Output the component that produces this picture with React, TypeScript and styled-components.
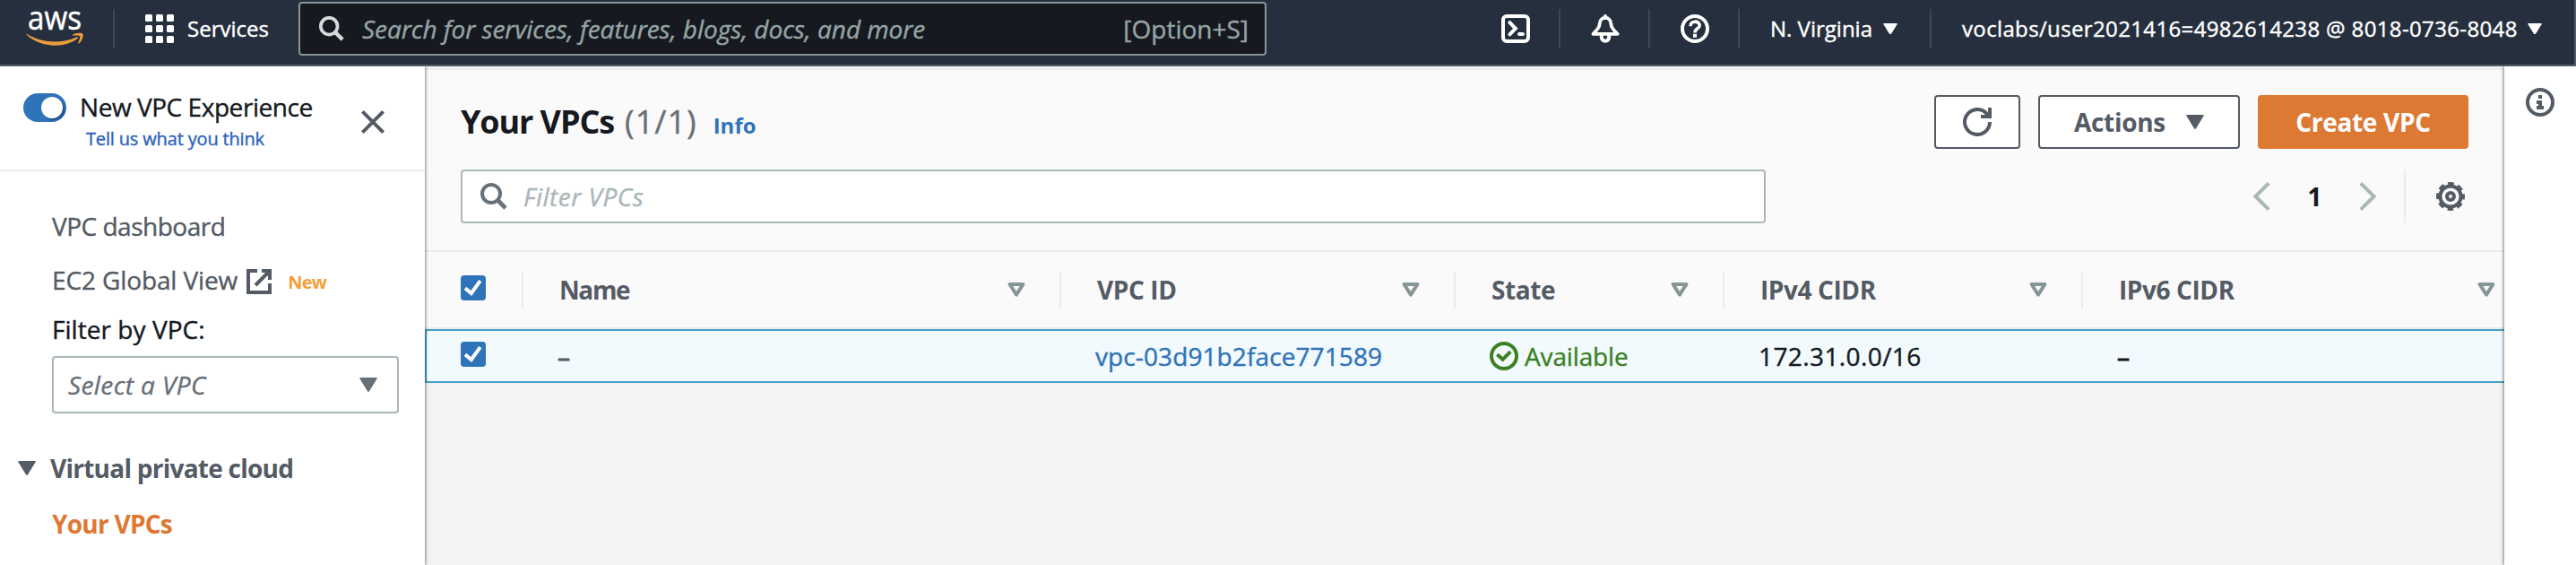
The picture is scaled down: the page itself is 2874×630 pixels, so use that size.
import React from "react";
import styled, { createGlobalStyle } from "styled-components";

const color = {
  nav: "#262f3e",
  ink: "#16191f",
  slate: "#545b64",
  muted: "#687078",
  line: "#eaeded",
  field: "#aab7b8",
  link: "#2f73b9",
  orange: "#dd7933",
};

const GlobalStyle = createGlobalStyle`
  * { box-sizing: border-box; }
  body {
    margin: 0;
    background: #f2f3f3;
    font-family: "Open Sans", "Noto Sans", sans-serif;
    font-size: 28px;
    font-weight: 400;
    line-height: 40px;
    color: ${color.ink};
    overflow: hidden;
  }
  svg { display: block; flex: none; }
`;

const Page = styled.div`
  display: flex;
  flex-direction: column;
  width: 2874px;
  height: 630px;
  overflow: hidden;
`;

const Label = styled.span<{ $track?: number; $bold?: boolean }>`
  white-space: nowrap;
  letter-spacing: ${(p) => p.$track ?? 0}px;
  -webkit-text-stroke: ${(p) => (p.$bold ? 0 : 0.4)}px;
`;

/* ---------- top navigation ---------- */

const TopNav = styled.header`
  display: flex;
  align-items: center;
  flex: none;
  height: 74px;
  padding: 0 0 8px 28px;
  background: ${color.nav};
  border-bottom: 2px solid ${color.slate};
  border-right: 2px solid ${color.slate};
  color: #fff;
  font-size: 24px;
  font-weight: 500;
  line-height: 42px;
  position: relative;
  z-index: 2;
`;

const NavDivider = styled.i`
  flex: none;
  width: 2px;
  height: 44px;
  background: #414750;
`;

const LogoSlot = styled.div`
  width: 98px;
  flex: none;
`;

const ServicesButton = styled.div`
  display: flex;
  align-items: center;
  gap: 15px;
  width: 205px;
  padding-left: 34px;
`;

const AppGrid = styled.div`
  display: grid;
  grid-template-columns: repeat(3, 8px);
  gap: 4px;
`;

const AppDot = styled.i`
  height: 8px;
  border-radius: 1.5px;
  background: #fff;
`;

const GlobalSearch = styled.div`
  display: flex;
  align-items: center;
  width: 1080px;
  height: 60px;
  padding: 0 18px 0 21px;
  border: 2px solid #879596;
  border-radius: 4px;
  background: ${color.ink};
  color: #95a5a6;
  font-size: 28px;
  font-weight: 400;
`;

const SearchHint = styled(Label)`
  flex: 1;
  margin-left: 20px;
  font-style: italic;
`;

const NavEnd = styled.div`
  display: flex;
  align-items: center;
  margin-left: auto;
`;

const NavIcon = styled.div`
  display: flex;
  justify-content: center;
  width: 98px;
  padding-left: 2px;
`;

const NavMenu = styled.div<{ $width: number }>`
  display: flex;
  align-items: center;
  justify-content: space-between;
  width: ${(p) => p.$width}px;
  padding: 0 36px 0 34px;
`;

/* ---------- body ---------- */

const Body = styled.div`
  display: flex;
  flex: 1;
  min-height: 0;
`;

const Sidebar = styled.nav`
  flex: none;
  width: 474px;
  background: #fff;
  box-shadow: 1px 0 3px rgba(0, 28, 36, 0.5);
  position: relative;
  z-index: 1;
`;

const Experience = styled.div`
  display: flex;
  align-items: flex-start;
  height: 117px;
  padding: 25px 45px 0 26px;
  border-bottom: 2px solid ${color.line};
`;

const Toggle = styled.div`
  width: 48px;
  height: 32px;
  margin-top: 5px;
  padding: 4px;
  border-radius: 16px;
  background: ${color.link};
`;

const Knob = styled.div`
  width: 24px;
  height: 24px;
  margin-left: auto;
  border-radius: 50%;
  background: #fff;
  box-shadow: 2px 2px 2px rgba(0, 28, 60, 0.4);
`;

const ExperienceText = styled.div`
  flex: 1;
  display: flex;
  flex-direction: column;
  margin-left: 15px;
`;

const FeedbackLink = styled(Label)`
  padding: 1px 0 0 7px;
  font-size: 20px;
  line-height: 30px;
  color: #2c63bd;
`;

const CloseSlot = styled.div`
  padding-top: 24px;
`;

const NavList = styled.div`
  display: flex;
  flex-direction: column;
  padding: 41px 29px 0 58px;
  color: ${color.slate};
`;

const NavLink = styled.div`
  display: flex;
  align-items: center;
  height: 40px;
  margin-bottom: 20px;
`;

const ExternalSlot = styled.span`
  margin: 3px 18px 0 10px;
`;

const NewBadge = styled(Label)`
  padding-top: 6px;
  font-size: 20px;
  font-weight: 700;
  color: #f2a03a;
`;

const FilterLabel = styled(Label)`
  margin-top: -5px;
  color: ${color.ink};
`;

const SelectBox = styled.div`
  display: flex;
  align-items: center;
  justify-content: space-between;
  height: 64px;
  margin-top: 10px;
  padding: 0 22px 1px 16px;
  border: 2px solid ${color.field};
  border-radius: 4px;
  font-style: italic;
  color: ${color.muted};
`;

const NavGroup = styled.div`
  display: flex;
  align-items: center;
  gap: 16px;
  margin: 41px 0 0 -38px;
  font-weight: 700;
`;

const ActiveLink = styled(Label)`
  margin-top: 22px;
  font-weight: 700;
  color: ${color.orange};
`;

/* ---------- main panel ---------- */

const Main = styled.main`
  flex: 1;
  min-width: 0;
  border-top: 2px solid #f2f3f3;
`;

const PanelHead = styled.section`
  height: 205px;
  padding: 28px 40px 0;
  border-top: 2px solid ${color.line};
  border-bottom: 2px solid ${color.line};
  background: #fafafa;
`;

const TitleRow = styled.div`
  display: flex;
  align-items: center;
  height: 60px;
  gap: 20px;
`;

const Title = styled.h1`
  display: flex;
  align-items: baseline;
  flex: 1;
  margin: 0;
  padding-top: 3px;
  font-size: 36px;
  line-height: 50px;
`;

const Count = styled(Label)`
  margin-left: 12px;
  font-weight: 400;
  color: ${color.muted};
`;

const InfoLink = styled(Label)`
  margin-left: 18px;
  font-size: 24px;
  color: ${color.link};
`;

const Button = styled.button<{ $width: number; $primary?: boolean }>`
  display: flex;
  align-items: center;
  justify-content: center;
  gap: 23px;
  width: ${(p) => p.$width}px;
  height: 60px;
  padding: 0;
  border: 2px solid ${(p) => (p.$primary ? color.orange : color.slate)};
  border-radius: 4px;
  background: ${(p) => (p.$primary ? color.orange : "#fff")};
  color: ${(p) => (p.$primary ? "#fff" : color.slate)};
  font: inherit;
  font-weight: 700;
`;

const ToolRow = styled.div`
  display: flex;
  align-items: center;
  height: 60px;
  margin-top: 23px;
`;

const FilterField = styled.div`
  display: flex;
  align-items: center;
  gap: 18px;
  width: 1456px;
  height: 60px;
  padding-left: 20px;
  border: 2px solid ${color.field};
  border-radius: 4px;
  background: #fff;
  color: ${color.field};
  font-style: italic;
`;

const Pager = styled.div`
  display: flex;
  align-items: center;
  justify-content: space-between;
  width: 139px;
  margin: 0 30px 0 auto;
  font-weight: 700;
`;

const SettingsSlot = styled.div`
  display: flex;
  align-items: center;
  height: 60px;
  padding: 0 4px 0 34px;
  border-left: 2px solid ${color.line};
`;

/* ---------- table ---------- */

const gridColumns = "110px 600px 440px 300px 400px 1fr";

const HeadRow = styled.div`
  display: grid;
  grid-template-columns: ${gridColumns};
  align-items: center;
  height: 86px;
  border-bottom: 2px solid ${color.line};
  background: #fafafa;
  color: ${color.slate};
  font-weight: 700;
`;

const HeadCell = styled.div<{ $last?: boolean }>`
  display: flex;
  align-items: center;
  justify-content: space-between;
  height: 42px;
  padding: 0 ${(p) => (p.$last ? 10 : 38)}px 0 40px;
  border-right: ${(p) => (p.$last ? 0 : 2)}px solid ${color.line};
`;

const DataRow = styled.div`
  display: grid;
  grid-template-columns: 108px 600px 440px 300px 400px 1fr;
  align-items: center;
  height: 60px;
  border: 2px solid #45a0c8;
  border-right: 0;
  background: #f2fafd;
`;

const DataCell = styled.div<{ $color?: string }>`
  display: flex;
  align-items: center;
  gap: 7px;
  padding: 0 0 1px 38px;
  color: ${(p) => p.$color ?? color.ink};
`;

const CheckCell = styled(DataCell)<{ $head?: boolean }>`
  height: ${(p) => (p.$head ? 42 : 56)}px;
  padding: 0 0 4px ${(p) => (p.$head ? 40 : 38)}px;
  border-right: ${(p) => (p.$head ? 2 : 0)}px solid ${color.line};
`;

const Dash = styled.span`
  -webkit-text-stroke: 1px;
`;

const HelpRail = styled.aside`
  display: flex;
  justify-content: center;
  flex: none;
  width: 80px;
  padding-top: 24px;
  background: #fff;
  box-shadow: -1px 0 3px rgba(0, 28, 36, 0.5);
  position: relative;
  z-index: 1;
`;

/* ---------- icons ---------- */

const Stroke = styled.svg<{ $color?: string }>`
  fill: none;
  stroke: ${(p) => p.$color ?? "currentColor"};
  stroke-width: 4;
`;

const AwsLogo = () => (
  <svg width="70" height="64" viewBox="0 0 70 64">
    <text x="3" y="33" fontSize="36" fontWeight="400" fill="#fff" stroke="#fff" strokeWidth="0.5" textLength="60" lengthAdjust="spacingAndGlyphs">
      aws
    </text>
    <path d="M1.4 38.6C1 37.8 1.8 37.6 2.6 38.2C19 48 40 49 57.4 41.4C58.8 40.8 59.8 42 58.6 43C45 53.4 18 54.4 1.4 38.6Z" fill="#eb9d3c" />
    <path d="M53.4 38.6C55.6 37 62.6 36 64.2 37.8C65.6 39.4 63.8 45.6 60.4 48.2C59.4 48.8 59 48.2 59.4 47.4C60.4 45 61.8 41.2 61 40.2C60.2 39.2 56.2 39.4 54.2 39.8C53 40 52.8 39.2 53.4 38.6Z" fill="#eb9d3c" />
  </svg>
);

const SearchIcon = ({ size, tint }: { size: number; tint: string }) => (
  <Stroke width={size} height={size} viewBox="0 0 30 30" $color={tint}>
    <circle cx="12" cy="12" r="10" />
    <path d="M18.5 18.5L28 28" strokeWidth="4.6" />
  </Stroke>
);

const Caret = ({ size = 20 }: { size?: number }) => (
  <svg width={size} height={size * 0.8} viewBox="0 0 20 16" fill="currentColor">
    <path d="M1 0H19Q20 0 19.6 1.2L11 15.2Q10 16.6 9 15.2L0.4 1.2Q0 0 1 0Z" />
  </svg>
);

const SortIcon = () => (
  <Stroke width="20" height="16" viewBox="0 0 20 16" $color="#879596" strokeLinejoin="round">
    <path d="M2.6 2H17.4L10 13.6Z" />
  </Stroke>
);

const Terminal = () => (
  <Stroke width="32" height="32" viewBox="0 0 32 32">
    <rect x="2" y="2" width="28" height="28" rx="4" />
    <path d="M9.4 9.2L15.8 15.8L9.4 22.4M20 22H24" strokeLinecap="round" />
  </Stroke>
);

const Bell = () => (
  <Stroke width="32" height="32" viewBox="0 0 32 32" strokeLinejoin="round">
    <path d="M16 2V4" strokeLinecap="round" />
    <path d="M2.4 21.8C6 18.4 9.4 15.4 9.6 11C9.8 6.4 12.4 3.8 16 3.8C19.6 3.8 22.2 6.4 22.4 11C22.6 15.4 26 18.4 29.6 21.8Z" strokeWidth="3.8" />
    <path d="M11.8 23V25.6A4.2 4.2 0 0 0 20.2 25.6V23" />
  </Stroke>
);

const Help = () => (
  <Stroke width="32" height="32" viewBox="0 0 32 32">
    <circle cx="16" cy="16" r="14" />
    <path d="M11 13.2C11 6.6 21.2 6.6 21.2 12.6C21.2 16.2 16 15.4 16 20.4" strokeWidth="3.6" />
    <path d="M14 23.8H18" />
  </Stroke>
);

const InfoIcon = () => (
  <Stroke width="32" height="32" viewBox="0 0 32 32" $color={color.slate}>
    <circle cx="16" cy="16" r="14" />
    <path d="M14 10H18M12 16H16V22M12 22H20" />
  </Stroke>
);

const Refresh = () => (
  <Stroke width="32" height="32" viewBox="0 0 32 32">
    <path d="M30 16A14 14 0 1 1 25.6 5.8L29 9.4" />
    <path d="M30 0V10H20" />
  </Stroke>
);

const External = () => (
  <Stroke width="28" height="28" viewBox="0 0 28 28">
    <path d="M12 2H2V26H26V16M17 2H26V12M10 18L25 3" />
  </Stroke>
);

const Close = () => (
  <Stroke width="26" height="26" viewBox="0 0 26 26" $color={color.slate}>
    <path d="M1.4 1.4L24.6 24.6M24.6 1.4L1.4 24.6" />
  </Stroke>
);

const Chevron = ({ next }: { next?: boolean }) => (
  <Stroke width="20" height="32" viewBox="0 0 20 32" $color={color.field}>
    <path d={next ? "M1.8 1.4L16.6 16L1.8 30.6" : "M18.2 1.4L3.4 16L18.2 30.6"} />
  </Stroke>
);

const Gear = () => (
  <Stroke width="32" height="32" viewBox="0 0 32 32" $color={color.slate}>
    <circle cx="16" cy="16" r="11.6" />
    <circle cx="16" cy="16" r="14" strokeDasharray="6.6 4.395" strokeDashoffset="3.3" />
    <circle cx="16" cy="16" r="4" />
  </Stroke>
);

const Checkbox = () => (
  <svg width="28" height="28" viewBox="0 0 28 28">
    <rect width="28" height="28" rx="4" fill={color.link} />
    <path d="M5 14.4L11.8 20L21.8 6.2" fill="none" stroke="#fff" strokeWidth="4" />
  </svg>
);

const StatusOk = () => (
  <Stroke width="32" height="32" viewBox="0 0 32 32">
    <circle cx="16" cy="16" r="14" />
    <path d="M8.4 14.2L14.6 19.8L23.2 11.2" />
  </Stroke>
);

const columns = [
  { name: "Name", track: -1.4 },
  { name: "VPC ID", track: -0.4 },
  { name: "State", track: -0.4 },
  { name: "IPv4 CIDR", track: -0.4 },
  { name: "IPv6 CIDR", track: -0.4 },
];

export default function App() {
  return (
    <Page>
      <GlobalStyle />
      <TopNav>
        <LogoSlot>
          <AwsLogo />
        </LogoSlot>
        <NavDivider />
        <ServicesButton>
          <AppGrid>
            {Array.from({ length: 9 }, (_, i) => (
              <AppDot key={i} />
            ))}
          </AppGrid>
          <Label>Services</Label>
        </ServicesButton>
        <GlobalSearch>
          <SearchIcon size={28} tint="#d5dbdb" />
          <SearchHint $track={-0.04}>Search for services, features, blogs, docs, and more</SearchHint>
          <Label>[Option+S]</Label>
        </GlobalSearch>
        <NavEnd>
          <NavIcon><Terminal /></NavIcon>
          <NavDivider />
          <NavIcon><Bell /></NavIcon>
          <NavDivider />
          <NavIcon><Help /></NavIcon>
          <NavDivider />
          <NavMenu $width={212}>
            <Label>N. Virginia</Label>
            <Caret size={16} />
          </NavMenu>
          <NavDivider />
          <NavMenu $width={717}>
            <Label $track={0.36}>voclabs/user2021416=4982614238 @ 8018-0736-8048</Label>
            <Caret size={16} />
          </NavMenu>
        </NavEnd>
      </TopNav>

      <Body>
        <Sidebar>
          <Experience>
            <Toggle><Knob /></Toggle>
            <ExperienceText>
              <Label $track={-0.45}>New VPC Experience</Label>
              <FeedbackLink $track={-0.16}>Tell us what you think</FeedbackLink>
            </ExperienceText>
            <CloseSlot><Close /></CloseSlot>
          </Experience>
          <NavList>
            <NavLink><Label $track={-0.5}>VPC dashboard</Label></NavLink>
            <NavLink>
              <Label $track={-0.12}>EC2 Global View</Label>
              <ExternalSlot><External /></ExternalSlot>
              <NewBadge $bold $track={-0.7}>New</NewBadge>
            </NavLink>
            <FilterLabel $track={0.05}>Filter by VPC:</FilterLabel>
            <SelectBox>
              <Label $track={0.4}>Select a VPC</Label>
              <Caret />
            </SelectBox>
            <NavGroup>
              <Caret />
              <Label $bold $track={-0.75}>Virtual private cloud</Label>
            </NavGroup>
            <ActiveLink $bold $track={-0.75}>Your VPCs</ActiveLink>
          </NavList>
        </Sidebar>

        <Main>
          <PanelHead>
            <TitleRow>
              <Title>
                <Label $bold $track={-1.1}>Your VPCs</Label>
                <Count $track={1}>(1/1)</Count>
                <InfoLink $bold>Info</InfoLink>
              </Title>
              <Button $width={96}><Refresh /></Button>
              <Button $width={225}>
                <Label $bold $track={-0.3}>Actions</Label>
                <Caret />
              </Button>
              <Button $width={235} $primary>
                <Label $bold $track={-0.3}>Create VPC</Label>
              </Button>
            </TitleRow>
            <ToolRow>
              <FilterField>
                <SearchIcon size={30} tint={color.muted} />
                <Label $track={0.5}>Filter VPCs</Label>
              </FilterField>
              <Pager>
                <Chevron />
                <Label $bold>1</Label>
                <Chevron next />
              </Pager>
              <SettingsSlot><Gear /></SettingsSlot>
            </ToolRow>
          </PanelHead>

          <HeadRow>
            <CheckCell $head><Checkbox /></CheckCell>
            {columns.map((c, i) => (
              <HeadCell key={c.name} $last={i === columns.length - 1}>
                <Label $bold $track={c.track}>{c.name}</Label>
                <SortIcon />
              </HeadCell>
            ))}
          </HeadRow>
          <DataRow>
            <CheckCell><Checkbox /></CheckCell>
            <DataCell $color={color.slate}><Dash>–</Dash></DataCell>
            <DataCell $color={color.link}><Label $track={0.1}>vpc-03d91b2face771589</Label></DataCell>
            <DataCell $color="#3b8124">
              <StatusOk />
              <Label $track={-0.15}>Available</Label>
            </DataCell>
            <DataCell><Label $track={0.4}>172.31.0.0/16</Label></DataCell>
            <DataCell><Dash>–</Dash></DataCell>
          </DataRow>
        </Main>

        <HelpRail><InfoIcon /></HelpRail>
      </Body>
    </Page>
  );
}
